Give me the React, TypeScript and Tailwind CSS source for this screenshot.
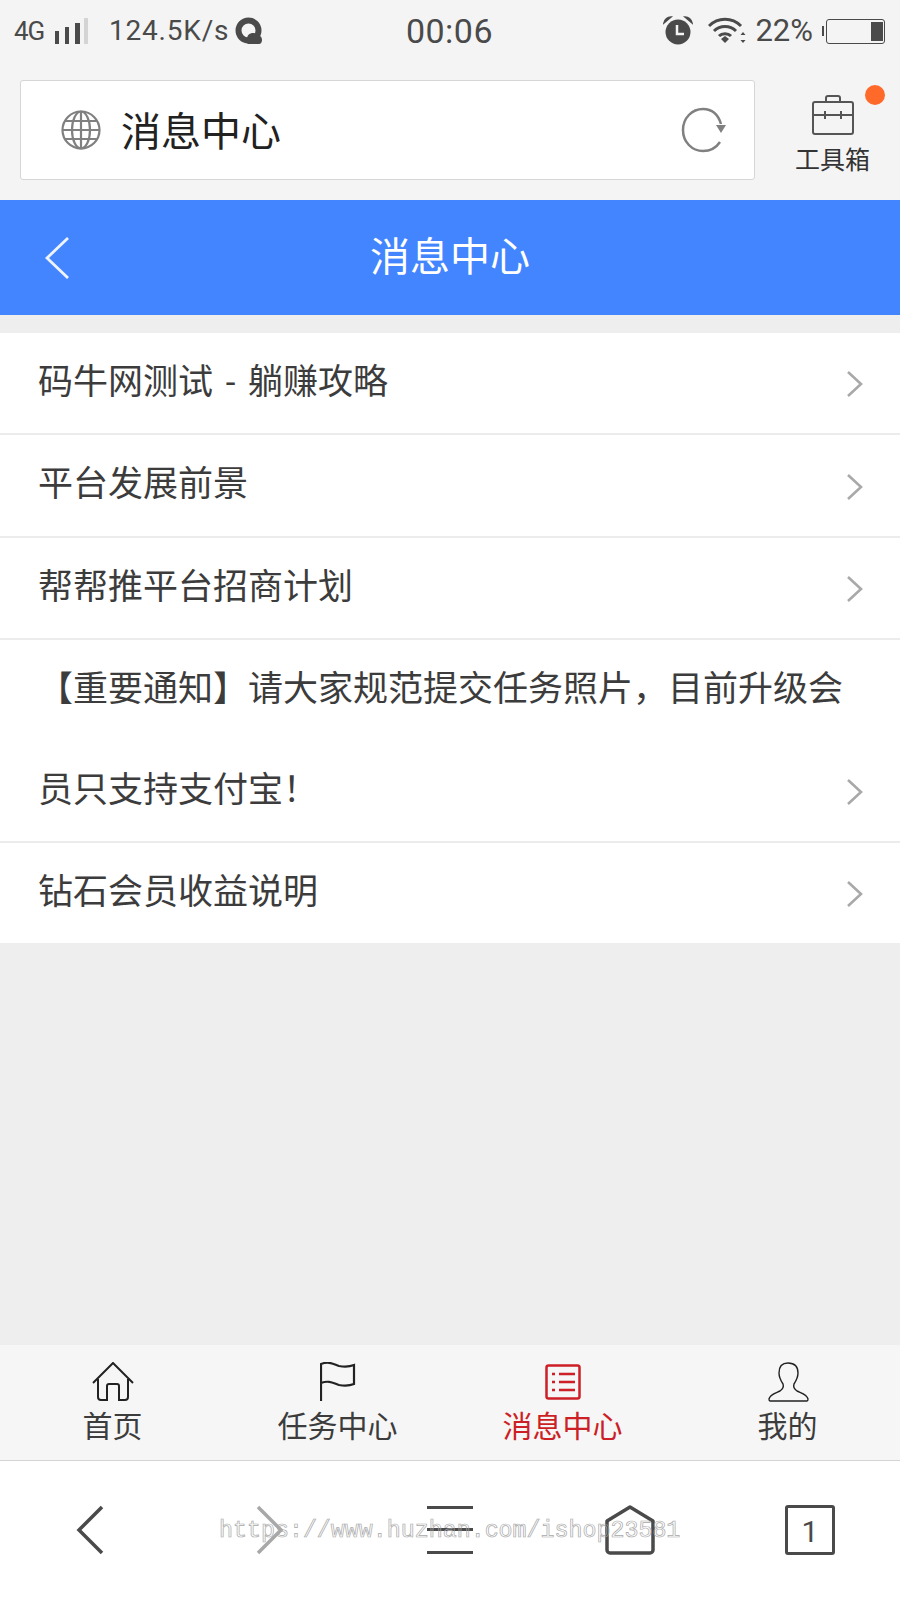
const CJK = "font-['Roboto','Noto_Sans_CJK_SC',sans-serif]";

const messages = [
  "码牛网测试 - 躺赚攻略",
  "平台发展前景",
  "帮帮推平台招商计划",
  "【重要通知】请大家规范提交任务照片，目前升级会员只支持支付宝！",
  "钻石会员收益说明",
];

function StatusBar() {
  return (
    <div className="grid h-[80px] grid-cols-3 items-center pb-[18px] pl-[14px] pr-[15px] text-[#4a4a4a]">
      <div className="flex items-center">
        <span className="w-[33px] text-[26px] tracking-[-1px]">4G</span>
        <svg width="34" height="26" viewBox="0 0 34 26" className="ml-[7px]">
          <rect x="1" y="13" width="4" height="13" fill="#4a4a4a" />
          <rect x="11" y="9" width="4" height="17" fill="#4a4a4a" />
          <rect x="21" y="5" width="5" height="21" fill="#4a4a4a" />
          <rect x="30" y="0" width="4" height="26" fill="#d4d4d4" />
        </svg>
        <span className="ml-[21px] text-[28px] tracking-[0.8px]">124.5K/s</span>
        <svg width="28" height="28" viewBox="0 0 28 28" className="ml-[6px]">
          <circle cx="13.5" cy="13.5" r="10" fill="none" stroke="#4a4a4a" strokeWidth="6" />
          <path d="M12 22c0-4 3-6 6-6 2 0 3 1 4 2 3 0 5 2 5 5 0 2-1 4-3 4H14c-2 0-3-2-2-5z" fill="#4a4a4a" />
        </svg>
      </div>
      <div className="text-center text-[34px] tracking-[0.5px]">00:06</div>
      <div className="flex items-center justify-end">
        <svg width="30" height="30" viewBox="0 0 30 30">
          <circle cx="15" cy="16" r="12.5" fill="#4a4a4a" />
          <path d="M14 9v9h7" fill="none" stroke="#f4f4f4" strokeWidth="2.5" />
          <path d="M1 7c1-4 4-6 7-6zM29 7c-1-4-4-6-7-6z" fill="#4a4a4a" stroke="#4a4a4a" strokeWidth="1.5" />
        </svg>
        <svg width="38" height="28" viewBox="0 0 38 28" className="ml-[15px]">
          <path d="M1 9c9-9 23-9 32 0M6 14c6-6 16-6 22 0M11 19c3-3 9-3 12 0" fill="none" stroke="#4a4a4a" strokeWidth="3" />
          <path d="M13 22l4-3 4 3-4 4z" fill="#4a4a4a" />
          <path d="M35 15l2.500 3h-5zM35 26l2.500-3h-5z" fill="#4a4a4a" />
        </svg>
        <span className="ml-[9px] text-[31px]">22%</span>
        <div className="ml-[9px] h-[10px] w-[2px] bg-[#4a4a4a]" />
        <div className="ml-[2px] flex h-[25px] w-[59px] items-center justify-end rounded-[3px] border-[1.5px] border-[#4a4a4a] pr-[1px]">
          <div className="h-[19px] w-[12px] bg-[#4a4a4a]" />
        </div>
      </div>
    </div>
  );
}

function AddressBar() {
  return (
    <div className="flex h-[120px] items-start bg-[#f4f4f4] pl-[20px]">
      <div className="flex h-[100px] w-[735px] items-center rounded-[3px] border border-[#d6d6d6] bg-white pl-[40px] pr-[26px]">
        <svg width="40" height="40" viewBox="0 0 40 40" fill="none" stroke="#808080" strokeWidth="2.200">
          <circle cx="20" cy="20" r="18.500" />
          <ellipse cx="20" cy="20" rx="9" ry="18.500" />
          <path d="M20 1.500v37M1.500 20h37M4 11h32M4 29h32" />
        </svg>
        <span className="ml-[20px] flex-1 pt-[6px] text-[40px] leading-none text-[#222]">消息中心</span>
        <svg width="48" height="46" viewBox="0 0 48 46" fill="none">
          <path d="M41 17C38 7 32 2 23 2 12 2 3 11 3 23s9 21 20 21c7 0 13-3 17-9" stroke="#808080" strokeWidth="2.500" />
          <path d="M36 18h10l-5 8z" fill="#808080" />
        </svg>
      </div>
      <div className="relative flex flex-1 flex-col items-center pl-[10px] pt-[15px]">
        <svg width="42" height="40" viewBox="0 0 42 40" fill="none" stroke="#555" strokeWidth="2">
          <rect x="1" y="7" width="40" height="32" rx="2" />
          <path d="M14 7V3a2 2 0 0 1 2-2h10a2 2 0 0 1 2 2v4M1 20h40M13 16v8M29 16v8" />
        </svg>
        <span className="mt-[10px] text-[25px] leading-[32px] text-[#333]">工具箱</span>
        <div className="absolute right-[15px] top-[5px] h-[20px] w-[20px] rounded-full bg-[#ff6a2b]" />
      </div>
    </div>
  );
}

function MessageRow({ text }: { text: string }) {
  return (
    <div className="flex items-end border-b-2 border-[#ececec] bg-white pl-[38px] pr-[36px] last:border-b-0">
      <p className="flex-1 text-[35px] leading-[100.4px] text-[#3c3c3c] [word-spacing:4px]">{text}</p>
      <svg width="18" height="26" viewBox="0 0 18 26" fill="none" stroke="#a9a9a9" strokeWidth="2.600" className="mb-[36px] shrink-0">
        <path d="M2 1l13 12L2 25" />
      </svg>
    </div>
  );
}

function TabBar() {
  const tabs = [
    {
      label: "首页",
      icon: (
        <svg width="42" height="40" viewBox="0 0 42 40" fill="none" stroke="#222" strokeWidth="2">
          <path d="M1 21L21 1l20 20" />
          <path d="M6 17v18a3 3 0 0 0 3 3h6V24a2 2 0 0 1 2-2h8a2 2 0 0 1 2 2v14h6a3 3 0 0 0 3-3V17" />
        </svg>
      ),
    },
    {
      label: "任务中心",
      icon: (
        <svg width="36" height="40" viewBox="0 0 36 40" fill="none" stroke="#222" strokeWidth="2.200">
          <path d="M1 39V2c8-3 12 0 18 2 6 1 10 1 15-1v19c-5 2-9 2-15 1-6-2-10-5-18-2" />
        </svg>
      ),
    },
    {
      label: "消息中心",
      active: true,
      icon: (
        <svg width="36" height="36" viewBox="0 0 36 36" fill="none" stroke="#cc1f26" strokeWidth="2.500" className="mb-[2px]">
          <rect x="1.500" y="1.500" width="33" height="33" rx="2" />
          <path d="M7 10h3M14 10h16M7 18h3M14 18h16M7 26h3M14 26h16" />
        </svg>
      ),
    },
    {
      label: "我的",
      icon: (
        <svg width="42" height="40" viewBox="0 0 42 40" fill="none" stroke="#222" strokeWidth="1.400">
          <path d="M21 1c-6 0-9 4-9 10 0 5 2 8 4 11 1 3 0 5-3 7-4 2-10 3-11 8 0 1 0 2 1 2h37c1 0 1-1 1-2-1-5-7-6-11-8-3-2-4-4-3-7 2-3 4-6 4-11 0-6-3-10-10-10z" />
        </svg>
      ),
    },
  ];

  return (
    <div className="grid h-[116px] grid-cols-4 border-b border-[#d4d4d4] bg-[#f6f6f6]">
      {tabs.map((tab) => (
        <div key={tab.label} className="flex flex-col items-center">
          <div className="flex h-[57px] items-end">{tab.icon}</div>
          <span className={`text-[30px] leading-[50px] ${tab.active ? "text-[#cc1f26]" : "text-[#3c3c3c]"}`}>
            {tab.label}
          </span>
        </div>
      ))}
    </div>
  );
}

function BrowserNav() {
  return (
    <div className="relative grid h-[139px] grid-cols-5 items-center bg-white pb-[2px]">
      <div className="flex justify-center">
        <svg width="28" height="50" viewBox="0 0 28 50" fill="none" stroke="#4a4a4a" strokeWidth="3.500">
          <path d="M26 2L3 25l23 23" />
        </svg>
      </div>
      <div className="flex justify-center">
        <svg width="28" height="50" viewBox="0 0 28 50" fill="none" stroke="#a8a8a8" strokeWidth="3.500">
          <path d="M2 2l23 23L2 48" />
        </svg>
      </div>
      <div className="flex justify-center">
        <div className="flex h-[48px] w-[46px] flex-col justify-between">
          <div className="h-[3px] bg-[#4a4a4a]" />
          <div className="h-[3px] bg-[#4a4a4a]" />
          <div className="h-[3px] bg-[#4a4a4a]" />
        </div>
      </div>
      <div className="flex justify-center">
        <svg width="50" height="50" viewBox="0 0 50 50" fill="none" stroke="#4a4a4a" strokeWidth="3.500" strokeLinejoin="round">
          <path d="M2 16L25 2l23 14v29a3 3 0 0 1-3 3H5a3 3 0 0 1-3-3z" />
        </svg>
      </div>
      <div className="flex justify-center">
        <div className="flex h-[50px] w-[50px] items-center justify-center rounded-[3px] border-[3px] border-[#4a4a4a] pt-[4px] text-[30px] leading-none text-[#4a4a4a]">
          1
        </div>
      </div>
      {/* watermark sits over the icons */}
      <div className="absolute left-[219px] top-[52px] font-['Liberation_Mono',monospace] text-[23.300px] leading-[36px] text-transparent [-webkit-text-stroke:0.700px_#a8a8a8]">
        https://www.huzhan.com/ishop23581
      </div>
    </div>
  );
}

export default function App() {
  return (
    <div className={`flex h-[1600px] w-[900px] flex-col overflow-hidden bg-[#eeeeee] ${CJK}`}>
      <div className="bg-[#f4f4f4]">
        <StatusBar />
        <AddressBar />
      </div>
      <div className="flex h-[115px] items-center bg-[#4285ff] pl-[44px]">
        <svg width="26" height="42" viewBox="0 0 26 42" fill="none" stroke="#eef4ff" strokeWidth="2.800">
          <path d="M24 1L3 21l21 20" />
        </svg>
        <div className="flex-1 pr-[70px] text-center text-[40px] text-white">消息中心</div>
      </div>
      <div className="mt-[18px] flex-1">
        {messages.map((m) => (
          <MessageRow key={m} text={m} />
        ))}
      </div>
      <TabBar />
      <BrowserNav />
    </div>
  );
}
